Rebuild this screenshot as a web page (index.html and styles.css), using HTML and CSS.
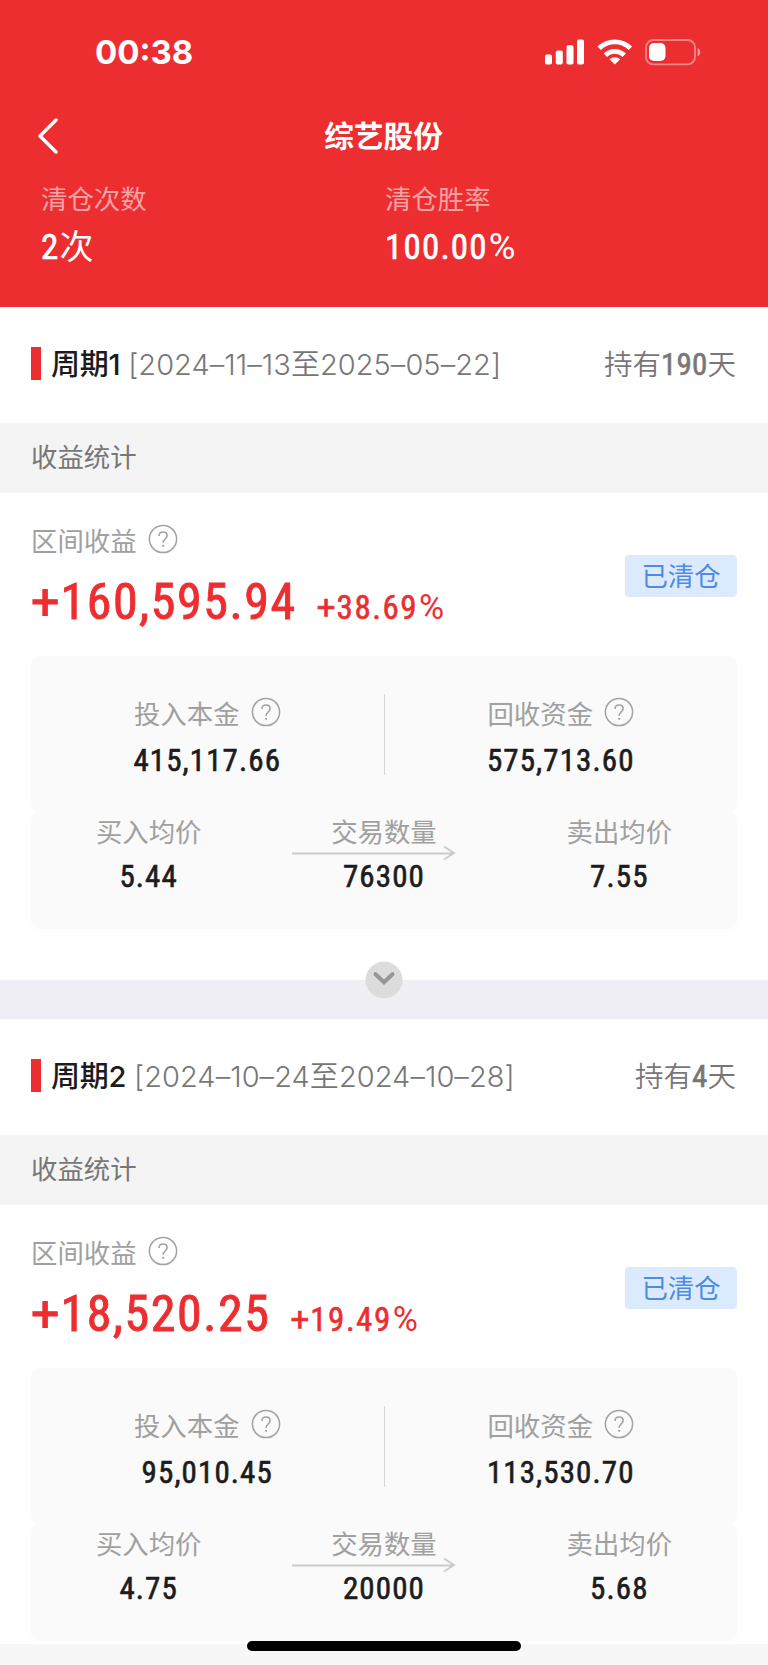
FILE: index.html
```html
<!DOCTYPE html>
<html lang="zh-CN">
<head>
<meta charset="utf-8">
<title>综艺股份</title>
<link rel="stylesheet" href="styles.css">
</head>
<body>
<svg class="defs" width="0" height="0">
  <symbol id="help" viewBox="0 0 30 30">
    <circle cx="15" cy="15" r="13.6" fill="none" stroke="#a3a3a3" stroke-width="1.5"/>
    <path d="M11 12.1C11 9.5 12.7 8 15.1 8c2.4 0 4 1.5 4 3.6 0 3.3-4 3.5-4 7.1" fill="none" stroke="#a3a3a3" stroke-width="1.6"/>
    <circle cx="15.1" cy="21.8" r="1.1" fill="#a3a3a3"/>
  </symbol>
  <symbol id="arrow" viewBox="0 0 164 16">
    <path d="M0 8.5H162M152 1.5L162 8L152 14.5" fill="none" stroke="#cbcbcb" stroke-width="1.8"/>
  </symbol>
</svg>
<header class="top">
  <div class="status">
    <span class="clock">00:38</span>
    <div class="status-icons">
      <svg class="signal" width="40" height="26" viewBox="0 0 40 26" fill="#fff">
        <rect x="0" y="15.5" width="7" height="10" rx="1.8"/><rect x="10.8" y="11.5" width="7" height="14" rx="1.8"/><rect x="21.5" y="6.3" width="7" height="19.2" rx="1.8"/><rect x="32" y=".5" width="7" height="25" rx="1.8"/>
      </svg>
      <svg class="wifi" width="36" height="26" viewBox="0 0 36 26">
        <g fill="none" stroke="#fff" stroke-width="4.8"><path d="M2.2 9.3C11 .7 24.6 .7 33.4 9.3"/><path d="M8.4 16.2C13.8 11 21.8 11 27.2 16.2"/></g>
        <path d="M12.4 20.2Q17.8 16.2 23.2 20.2L17.8 25.5Z" fill="#fff"/>
      </svg>
      <svg class="battery" width="57" height="28" viewBox="0 0 57 28">
        <rect x="1" y="1" width="49" height="24.4" rx="7.5" fill="none" stroke="#fff" stroke-opacity=".42" stroke-width="1.9"/>
        <rect x="4" y="4" width="16.5" height="18" rx="5" fill="#fff"/>
        <path d="M52.6 9v8.4c1.7-.7 2.7-2.4 2.7-4.2S54.300 9.700 52.600 9z" fill="#fff" fill-opacity=".5"/>
      </svg>
    </div>
  </div>
  <div class="nav">
    <svg class="back" width="22" height="36" viewBox="0 0 22 36"><path d="M19 2L3 18L19 34" fill="none" stroke="#fff" stroke-width="3.4" stroke-linecap="round" stroke-linejoin="round"/></svg>
    <h1 class="title">综艺股份</h1>
  </div>
  <div class="summary">
    <div class="summary-item"><div class="summary-label">清仓次数</div><div class="summary-value"><span class="num">2</span>次</div></div>
    <div class="summary-item"><div class="summary-label">清仓胜率</div><div class="summary-value"><span class="num">100.00<span class="pct">%</span></span></div></div>
  </div>
</header>
<main>
  <section class="period">
    <div class="period-head">
      <span class="mark"></span><span class="name">周期1</span><span class="dates">[2024–11–13至2025–05–22]</span>
      <span class="held">持有<span class="num">190</span>天</span>
    </div>
    <div class="section-bar">收益统计</div>
    <div class="profit">
      <div>
        <div class="label">区间收益<svg class="help"><use href="#help"/></svg></div>
        <div class="amounts"><span class="num amount"><span class="plus">+</span>160,595.94</span><span class="num rate"><span class="plus">+</span>38.69<span class="pct">%</span></span></div>
      </div>
      <span class="badge">已清仓</span>
    </div>
    <div class="card funds">
      <div class="cell"><div class="label">投入本金<svg class="help"><use href="#help"/></svg></div><div class="num value">415,117.66</div></div>
      <div class="divider"></div>
      <div class="cell"><div class="label">回收资金<svg class="help"><use href="#help"/></svg></div><div class="num value">575,713.60</div></div>
    </div>
    <div class="card prices">
      <div class="cell"><div class="label">买入均价</div><div class="num value">5.44</div></div>
      <div class="cell"><div class="label">交易数量</div><svg class="arrow"><use href="#arrow"/></svg><div class="num value">76300</div></div>
      <div class="cell"><div class="label">卖出均价</div><div class="num value">7.55</div></div>
    </div>
    <div class="gap">
      <svg class="expand" width="38" height="38" viewBox="0 0 38 38"><circle cx="19" cy="19" r="18.500" fill="#dcdcdc"/><path d="M10.500 13.200L19 21.300L27.500 13.200" fill="none" stroke="#969696" stroke-width="4" stroke-linecap="round"/></svg>
    </div>
  </section>
  <section class="period">
    <div class="period-head">
      <span class="mark"></span><span class="name">周期2</span><span class="dates">[2024–10–24至2024–10–28]</span>
      <span class="held">持有<span class="num">4</span>天</span>
    </div>
    <div class="section-bar">收益统计</div>
    <div class="profit">
      <div>
        <div class="label">区间收益<svg class="help"><use href="#help"/></svg></div>
        <div class="amounts"><span class="num amount"><span class="plus">+</span>18,520.25</span><span class="num rate"><span class="plus">+</span>19.49<span class="pct">%</span></span></div>
      </div>
      <span class="badge">已清仓</span>
    </div>
    <div class="card funds">
      <div class="cell"><div class="label">投入本金<svg class="help"><use href="#help"/></svg></div><div class="num value">95,010.45</div></div>
      <div class="divider"></div>
      <div class="cell"><div class="label">回收资金<svg class="help"><use href="#help"/></svg></div><div class="num value">113,530.70</div></div>
    </div>
    <div class="card prices">
      <div class="cell"><div class="label">买入均价</div><div class="num value">4.75</div></div>
      <div class="cell"><div class="label">交易数量</div><svg class="arrow"><use href="#arrow"/></svg><div class="num value">20000</div></div>
      <div class="cell"><div class="label">卖出均价</div><div class="num value">5.68</div></div>
    </div>
  </section>
</main>
<div class="home-indicator"></div>
</body>
</html>
```

FILE: styles.css
```css
* { box-sizing: border-box; }
body {
  margin: 0;
  width: 768px;
  height: 1665px;
  overflow: hidden;
  background: #f7f7f7;
  font-family: Inter, "Noto Sans CJK SC", sans-serif;
  position: relative;
}
.defs { position: absolute; }
svg { display: block; flex: none; }
.num { font-family: Roboto, "Noto Sans CJK SC", sans-serif; font-weight: 400; font-stretch: 75%; letter-spacing: 1.1px; -webkit-text-stroke: .6px currentColor; }
.pct, .plus { font-stretch: 100%; letter-spacing: 0; }
.pct { margin-left: 1px; font-size: 1.04em; -webkit-text-stroke-width: 0; }

.top { height: 307px; background: #ed2e31; color: #fff; }
.status { height: 100px; display: flex; justify-content: space-between; padding: 32px 66px 0 95px; }
.clock { font-size: 33px; line-height: 40px; font-weight: 750; }
.status-icons { display: flex; padding-top: 7px; }
.wifi { margin-left: 12px; }
.battery { margin-left: 12px; }
.nav { height: 72px; display: grid; grid-template-columns: 100px 1fr 100px; align-items: center; padding-bottom: 1px; }
.back { margin-left: 37px; }
.title { margin: 0; padding-right: 1px; font-size: 29.700px; line-height: 44px; font-weight: 700; text-align: center; }
.summary { display: flex; padding-left: 41px; padding-top: 8px; }
.summary-item { width: 344px; }
.summary-label { font-size: 26.400px; line-height: 38px; color: #f7a3a4; }
.summary-value { display: flex; align-items: baseline; margin-top: 6px; font-size: 34px; line-height: 46px; }
.summary-value .num { font-size: 35px; letter-spacing: 1.200px; }

.period { background: #fff; }
.period-head { height: 116px; padding: 0 32px 6px 31px; display: flex; align-items: center; }
.mark { width: 10px; height: 33px; margin-top: 3px; background: #ed2e31; }
.name { margin-left: 10px; font-size: 29px; font-weight: 500; color: #1c1c1e; letter-spacing: -.3px; }
.dates { margin-left: 8px; font-size: 29px; font-weight: 350; color: #777; white-space: nowrap; letter-spacing: .05px; }
.held { margin-left: auto; font-size: 28.500px; color: #777; white-space: nowrap; font-weight: 350; }
.held .num { font-size: 31px; letter-spacing: .2px; }
.section-bar { height: 70px; padding-left: 31px; line-height: 68px; font-size: 26.400px; background: #f4f4f4; color: #777; }
.profit { height: 163px; padding: 30px 31px 0; display: flex; justify-content: space-between; align-items: flex-start; }
.label { height: 36px; display: flex; align-items: center; font-size: 26.400px; line-height: 36px; color: #a0a0a0; }
.help { width: 30px; height: 30px; margin: -4px 0 0 11px; }
.amounts { display: flex; align-items: baseline; margin-top: 12px; height: 62px; line-height: 62px; color: #ed2e31; }
.amount { font-size: 50px; letter-spacing: 1.600px; -webkit-text-stroke-width: .9px; }
.amount .plus { margin-right: 1px; }
.rate { font-size: 33px; margin-left: 20px; letter-spacing: 1.500px; }
.rate .plus { margin-right: 1px; }
.badge { margin-top: 32px; width: 112px; height: 42px; line-height: 43px; border-radius: 4px; text-align: center; background: #dceaff; color: #4c8ce2; font-size: 26.400px; }
.card { margin: 0 31px; background: #fafafa; border-radius: 8px; display: flex; }
.cell { flex: 1; position: relative; display: flex; flex-direction: column; align-items: center; }
.value { color: #1c1c1e; font-size: 31px; line-height: 40px; }
.funds { height: 156px; padding-top: 38px; }
.funds .label { margin-top: 2px; }
.funds .value { margin-top: 9px; }
.divider { width: 1px; height: 81px; background: #d5d5d5; }
.prices { height: 117px; }
.prices .label { margin-top: 2px; }
.prices .value { margin-top: 7px; }
.arrow { position: absolute; top: 33px; left: 50%; width: 164px; height: 16px; margin-left: -92px; }
.gap { margin-top: 51px; height: 39px; background: #efeef5; position: relative; }
.expand { position: absolute; left: 365px; top: -19px; }
.period:last-child { height: 625px; }
.home-indicator { position: absolute; left: 247px; top: 1641px; width: 274px; height: 10px; border-radius: 5px; background: #000; }
```
